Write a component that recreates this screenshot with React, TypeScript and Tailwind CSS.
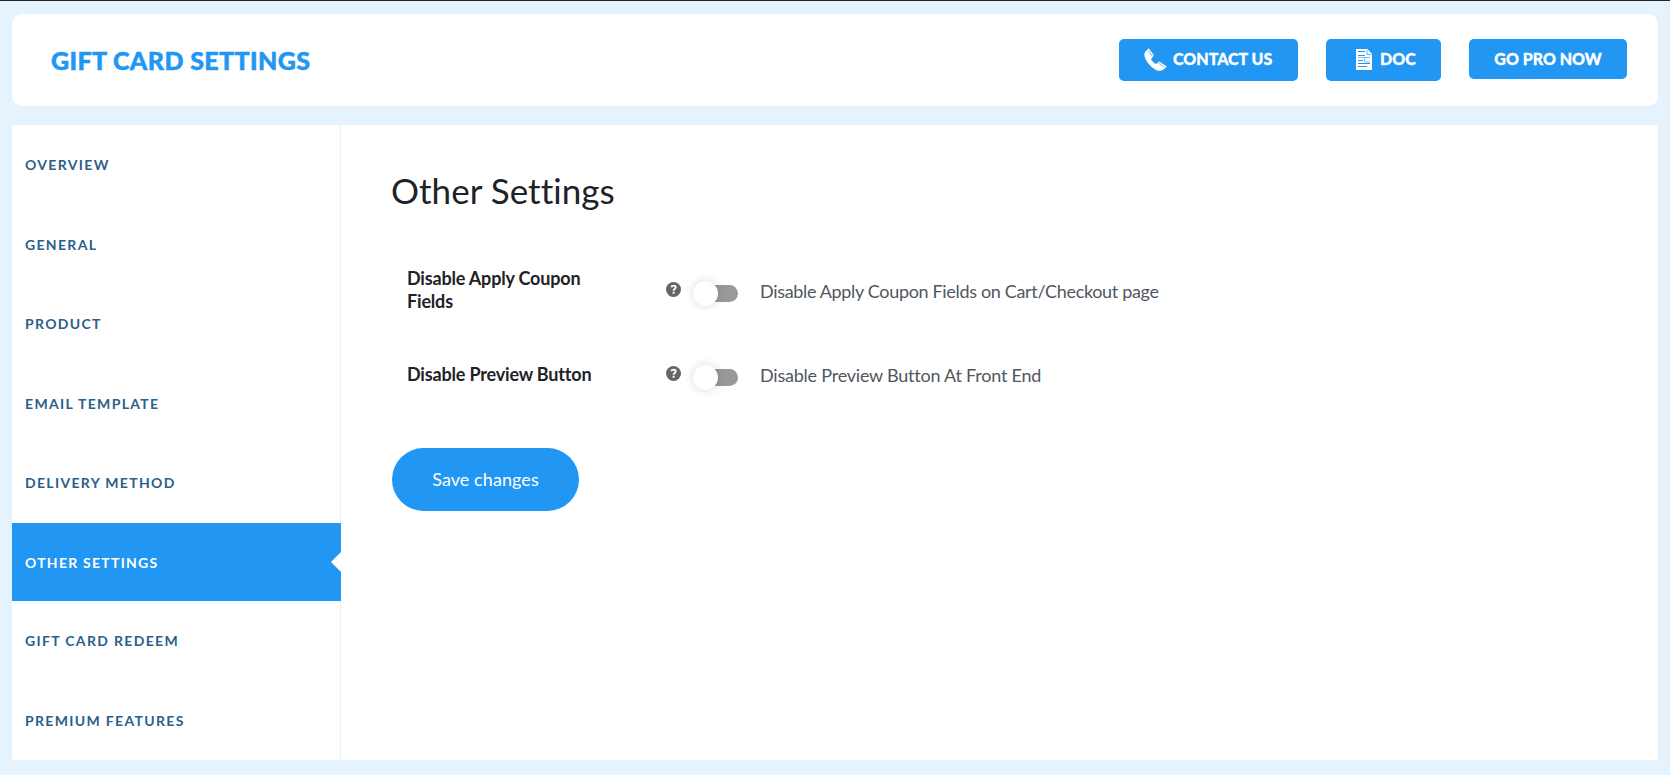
const navItems = [
  "Overview",
  "General",
  "Product",
  "Email Template",
  "Delivery Method",
  "Other Settings",
  "Gift Card Redeem",
  "Premium Features",
];

const settings = [
  {
    label: "Disable Apply Coupon Fields",
    description: "Disable Apply Coupon Fields on Cart/Checkout page",
    tracking: "tracking-[-0.330px]",
  },
  {
    label: "Disable Preview Button",
    description: "Disable Preview Button At Front End",
    tracking: "tracking-[-0.220px]",
  },
];

function PhoneIcon() {
  return (
    <svg width="23" height="23" viewBox="0 0 23 23" fill="#fff" className="shrink-0">
      <path d="M3.400 1.700C.4 3.600-.3 6.600 1 9.800c2.200 5.200 6.600 10.300 11.600 12.400 3.200 1.200 5.700.5 7.700-1.100L13.600 15c-1.200 1-2.500.9-3.500-.1L7.600 12.200c-.8-1-.4-2 .9-3Z" />
      <path d="M3.400 1.700 4.700.2l5.200 7-1.400 2ZM13.600 15l1.600-1.500 7.600 5-2.500 2.600Z" />
      <path d="m4.500 2.700 4 5.400M15 15.200l5.600 4" stroke="#2196f3" strokeWidth=".8" opacity=".75" />
    </svg>
  );
}

function DocIcon() {
  return (
    <svg width="16" height="21" viewBox="0 0 16 21" fill="none" className="shrink-0">
      <path d="M0 0h11.500l4.500 5v16H0Z" fill="#fff" />
      <path d="M11 1v4.500h4" stroke="#2196f3" strokeWidth=".7" />
      <path d="M2 2.500h7M2 6.500h7M2 11.500h5M2 14.500h12M2 17.500h9" stroke="#2196f3" />
      <path d="M2 8.500h12M8.500 9.500v3.500H14" stroke="#2196f3" opacity=".6" />
    </svg>
  );
}

function HelpIcon() {
  return (
    <span className="mt-px flex size-[15px] shrink-0 items-center justify-center rounded-full bg-[#666]">
      <svg width="15" height="15" viewBox="0 0 15 15" fill="none">
        <path
          d="M5.300 5.300c.3-1.300 1.200-1.700 2.300-1.700 1.300 0 2.100.6 2.100 1.700 0 1.600-2.100 1.600-2.100 3.400"
          stroke="#fff"
          strokeWidth="1.900"
        />
        <path d="M6.600 9.800h2v1.900h-2z" fill="#fff" />
      </svg>
    </span>
  );
}

function Toggle() {
  return (
    <span className="relative ml-[14px] mt-1 h-[17px] w-[43px] shrink-0 rounded-full bg-[#999]">
      <span className="absolute -left-[2px] -top-1 size-[25px] rounded-full bg-white shadow-[0_0_10px_rgba(0,0,0,0.16)]" />
    </span>
  );
}

export default function App() {
  return (
    <div className="flex h-[775px] flex-col border-t border-[#1d2327] bg-[#e5f3ff] px-3 pt-[13px] font-['Lato',sans-serif]">
      <header className="flex h-[92px] shrink-0 items-start justify-between rounded-[10px] bg-white pl-[39px] pr-[31px]">
        <h1 className="mt-[28px] text-[25px] leading-[36px] font-black tracking-[0.380px] text-[#2196f3] [-webkit-text-stroke:0.5px_#2196f3]">
          GIFT CARD SETTINGS
        </h1>
        <div className="mt-[25px] flex items-start gap-7 text-base leading-[40px] font-black text-white [-webkit-text-stroke:0.3px_white]">
          <a className="flex h-[42px] w-[179px] rounded-[5px] bg-[#2196f3] pl-[25px]">
            <span className="mt-[9px] mr-[6px]">
              <PhoneIcon />
            </span>
            CONTACT US
          </a>
          <a className="flex h-[42px] w-[115px] rounded-[5px] bg-[#2196f3] pl-[30px]">
            <span className="mt-[10px] mr-2">
              <DocIcon />
            </span>
            DOC
          </a>
          <a className="h-10 w-[158px] rounded-[5px] bg-[#2196f3] text-center">GO PRO NOW</a>
        </div>
      </header>
      <main className="mt-[19px] flex h-[635px] bg-white">
        <nav className="flex w-[329px] flex-col border-r border-[#eaeff2]">
          {navItems.map((item) =>
            item === "Other Settings" ? (
              <a
                key={item}
                className="relative -mr-px flex h-[78px] shrink-0 items-center bg-[#2196f3] pt-0.5 pl-[13px] text-sm font-bold tracking-[1.250px] text-white uppercase"
              >
                {item}
                <span className="absolute right-0 top-[29px] size-0 border-y-[10px] border-r-[10px] border-y-transparent border-r-white" />
              </a>
            ) : (
              <a
                key={item}
                className="flex h-[79.570px] items-center pt-[0.800px] pl-[13px] text-sm font-bold tracking-[1.330px] text-[#2b5f8c] uppercase"
              >
                {item}
              </a>
            )
          )}
        </nav>
        <section className="pt-[41px] pl-[50px]">
          <h2 className="text-[35px] leading-[48px] tracking-[0.050px] text-[#1d2327] [font-variant-ligatures:none]">Other Settings</h2>
          <div className="mt-[53px] flex flex-col pl-4">
            {settings.map((s, i) => (
              <div key={s.label} className={i === 0 ? "flex h-[96px]" : "flex h-[85px]"}>
                <div className="w-[200px] pr-2 text-[18px] leading-[23px] font-bold tracking-[-0.180px] text-[#1d2327]">
                  {s.label}
                </div>
                <div className={i === 0 ? "flex items-start pt-[14px] pl-[59px]" : "flex items-start pt-[2px] pl-[59px]"}>
                  <HelpIcon />
                  <Toggle />
                  <span className={`-mt-0.5 ml-[22px] text-[18px] leading-[24px] text-[#50575e] ${s.tracking}`}>
                    {s.description}
                  </span>
                </div>
              </div>
            ))}
          </div>
          <button className="ml-px h-[63px] w-[187px] rounded-full bg-[#2196f3] text-[18px] tracking-[0.080px] text-white">
            Save changes
          </button>
        </section>
      </main>
    </div>
  );
}
